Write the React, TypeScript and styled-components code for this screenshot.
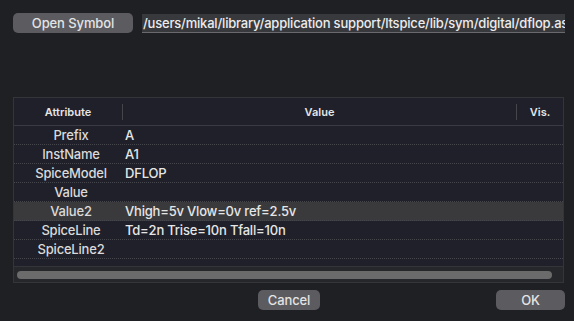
import styled, { createGlobalStyle } from 'styled-components';

const GlobalStyle = createGlobalStyle`
  html, body {
    margin: 0;
    padding: 0;
    background: #1f2024;
  }
  body {
    font-family: Inter, "Liberation Sans", sans-serif;
    color: #dcdcdc;
  }
`;

const Window = styled.div`
  width: 574px;
  height: 321px;
  box-sizing: border-box;
  padding: 13px 9px 0 13px;
  display: flex;
  flex-direction: column;
  overflow: hidden;
`;

const TopRow = styled.div`
  display: flex;
  align-items: center;
  gap: 9px;
  height: 20px;
`;

const Button = styled.button<{ $width: number }>`
  width: ${(p) => p.$width}px;
  height: 20px;
  flex-shrink: 0;
  border: none;
  border-radius: 5px;
  background: #5b5b60;
  color: #e4e4e4;
  font-family: Inter, "Liberation Sans", sans-serif;
  font-size: 13px;
  font-weight: 500;
  letter-spacing: -0.1px;
  padding: 0;
  line-height: 20px;
`;

const PathField = styled.div`
  flex: 1;
  height: 18px;
  margin-top: 1px;
  background: #38393d;
  border-bottom: 1px solid #6a6a6e;
  color: #ececec;
  font-size: 13px;
  font-weight: 500;
  letter-spacing: -0.2px;
  line-height: 18px;
  white-space: nowrap;
  overflow: hidden;
  padding-left: 1px;
`;

const Table = styled.div`
  margin-top: 64px;
  width: 551px;
  height: 186px;
  box-sizing: border-box;
  border: 1px solid #34353b;
  background: #1f2029;
  display: flex;
  flex-direction: column;
`;

const HeaderRow = styled.div`
  display: grid;
  grid-template-columns: 108px 394px 1fr;
  height: 27px;
  border-bottom: 1px solid #3a3b42;
  align-items: center;
`;

const HeaderCell = styled.div<{ $divider?: boolean }>`
  font-size: 11px;
  font-weight: 600;
  color: #e6e6e6;
  text-align: center;
  height: 16px;
  line-height: 16px;
  border-left: ${(p) => (p.$divider ? '1px solid #45464c' : 'none')};
`;

const Body = styled.div`
  flex: 1;
  overflow: hidden;
`;

const Row = styled.div<{ $selected?: boolean }>`
  display: grid;
  grid-template-columns: 108px 1fr;
  height: 18px;
  border-bottom: 1px dotted #45464c;
  background: ${(p) => (p.$selected ? '#3a3a3c' : 'transparent')};
  font-size: 13px;
  font-weight: 500;
  letter-spacing: -0.2px;
  line-height: 18px;
`;

const NameCell = styled.div`
  text-align: center;
  padding-left: 6px;
  color: #dadada;
`;

const ValueCell = styled.div`
  padding-left: 3px;
  color: #e6e6e6;
  white-space: nowrap;
`;

const ScrollArea = styled.div`
  height: 15px;
  border-top: 1px solid #34353b;
  background: #26272b;
  display: flex;
  align-items: center;
  padding: 0 11px 0 3px;
`;

const Thumb = styled.div`
  flex: 1;
  height: 8px;
  border-radius: 4px;
  background: #6b6b6b;
`;

const Footer = styled.div`
  display: flex;
  align-items: center;
  height: 20px;
  margin-top: 7px;
  padding-left: 245px;
`;

const Spacer = styled.div`
  flex: 1;
`;

const rows = [
  { name: 'Prefix', value: 'A' },
  { name: 'InstName', value: 'A1' },
  { name: 'SpiceModel', value: 'DFLOP' },
  { name: 'Value', value: '' },
  { name: 'Value2', value: 'Vhigh=5v Vlow=0v ref=2.5v', selected: true },
  { name: 'SpiceLine', value: 'Td=2n Trise=10n Tfall=10n' },
  { name: 'SpiceLine2', value: '' },
  { name: '', value: '' },
];

export default function App() {
  return (
    <>
      <GlobalStyle />
      <Window>
        <TopRow>
          <Button $width={120}>Open Symbol</Button>
          <PathField>/users/mikal/library/application support/ltspice/lib/sym/digital/dflop.asy</PathField>
        </TopRow>
        <Table>
          <HeaderRow>
            <HeaderCell>Attribute</HeaderCell>
            <HeaderCell $divider>Value</HeaderCell>
            <HeaderCell $divider>Vis.</HeaderCell>
          </HeaderRow>
          <Body>
            {rows.map((r, i) => (
              <Row key={i} $selected={r.selected}>
                <NameCell>{r.name}</NameCell>
                <ValueCell>{r.value}</ValueCell>
              </Row>
            ))}
          </Body>
          <ScrollArea>
            <Thumb />
          </ScrollArea>
        </Table>
        <Footer>
          <Button $width={62}>Cancel</Button>
          <Spacer />
          <Button $width={69}>OK</Button>
        </Footer>
      </Window>
    </>
  );
}
